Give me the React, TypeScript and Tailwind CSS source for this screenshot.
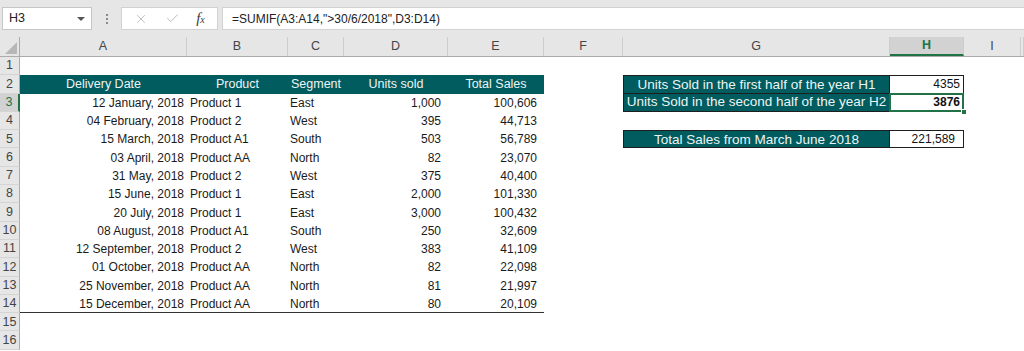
import React from 'react';
import { X, Check } from 'lucide-react';

const COLS = 'grid grid-cols-[20px_167px_101px_56px_104px_96px_79px_267px_74px_57px_1fr] grid-rows-[100%]';
const TEAL = 'bg-[#005c5f] text-[#eef4f4]';

const data = [
  ['12 January, 2018', 'Product 1', 'East', '1,000', '100,606'],
  ['04 February, 2018', 'Product 2', 'West', '395', '44,713'],
  ['15 March, 2018', 'Product A1', 'South', '503', '56,789'],
  ['03 April, 2018', 'Product AA', 'North', '82', '23,070'],
  ['31 May, 2018', 'Product 2', 'West', '375', '40,400'],
  ['15 June, 2018', 'Product 1', 'East', '2,000', '101,330'],
  ['20 July, 2018', 'Product 1', 'East', '3,000', '100,432'],
  ['08 August, 2018', 'Product A1', 'South', '250', '32,609'],
  ['12 September, 2018', 'Product 2', 'West', '383', '41,109'],
  ['01 October, 2018', 'Product AA', 'North', '82', '22,098'],
  ['25 November, 2018', 'Product AA', 'North', '81', '21,997'],
  ['15 December, 2018', 'Product AA', 'North', '80', '20,109'],
];

const colLetters = ['A', 'B', 'C', 'D', 'E', 'F', 'G', 'H', 'I', ''];

const RowHead: React.FC<{ n: number }> = ({ n }) => (
  <div
    className={`flex items-center justify-center text-[12.5px] border-b border-[#d4d4d4] ${
      n === 3
        ? 'bg-[#d2d2d2] text-[#217346] border-r-2 border-r-[#217346]'
        : 'bg-[#e6e6e6] text-[#444] border-r border-r-[#ababab]'
    }`}
  >
    {n}
  </div>
);

const Empty = () => <div />;

const Toolbar = () => (
  <div className="h-[37px] bg-[#e6e6e6] flex items-start pt-[7px] pl-[2px]">
    {/* Name box */}
    <div className="w-[90px] h-[23px] bg-white border border-[#c6c6c6] flex items-center justify-between pl-[6px] pr-[6px] text-[12.5px] text-[#222]">
      <span>H3</span>
      <span className="w-0 h-0 border-l-[4px] border-r-[4px] border-t-[4px] border-l-transparent border-r-transparent border-t-[#555]" />
    </div>
    {/* vertical dots */}
    <div className="w-[29px] h-[23px] flex flex-col items-center justify-center gap-[2px]">
      <span className="w-[2px] h-[2px] bg-[#8a8a8a]" />
      <span className="w-[2px] h-[2px] bg-[#8a8a8a]" />
      <span className="w-[2px] h-[2px] bg-[#8a8a8a]" />
    </div>
    {/* cancel / enter / fx */}
    <div className="w-[97px] h-[23px] bg-white border border-[#d2d2d2] flex items-center justify-around px-[4px]">
      <X size={14} strokeWidth={1.2} className="text-[#a6a6a6]" />
      <Check size={15} strokeWidth={1.2} className="text-[#a6a6a6]" />
      <span className="text-[#3a3a3a] text-[15px] italic font-['Liberation_Serif',serif] leading-none">
        f<span className="text-[10px]">x</span>
      </span>
    </div>
    {/* formula input */}
    <div className="ml-[4px] flex-1 h-[23px] bg-white border border-[#d2d2d2] border-r-0 flex items-center pl-[9px] text-[12px] text-[#222]">
      =SUMIF(A3:A14,"&gt;30/6/2018",D3:D14)
    </div>
  </div>
);

const ColHeader = () => (
  <div className={`${COLS} h-[20px] bg-[#e6e6e6] border-b border-[#ababab]`}>
    <div className="relative border-r border-[#ababab]">
      <svg className="absolute right-[2px] bottom-[2px]" width="12" height="12" viewBox="0 0 12 12">
        <polygon points="12,0 12,12 0,12" fill="#b7b7b7" />
      </svg>
    </div>
    {colLetters.map((l, i) => (
      <div
        key={i}
        className={`flex items-center justify-center text-[12.5px] border-r border-[#cdcdcd] ${
          l === 'H'
            ? 'bg-[#d2d2d2] text-[#217346] font-bold border-b-2 border-b-[#217346]'
            : 'text-[#444]'
        }`}
      >
        {l}
      </div>
    ))}
  </div>
);

export default function App() {
  const rows: React.ReactNode[] = [];

  for (let n = 1; n <= 16; n++) {
    let cells: React.ReactNode;
    if (n === 2) {
      cells = (
        <>
          <div className={`${TEAL} flex items-center justify-center text-[12.5px]`}>Delivery Date</div>
          <div className={`${TEAL} flex items-center justify-center text-[12.5px]`}>Product</div>
          <div className={`${TEAL} flex items-center justify-center text-[12.5px]`}>Segment</div>
          <div className={`${TEAL} flex items-center justify-center text-[12.5px]`}>Units sold</div>
          <div className={`${TEAL} flex items-center justify-center text-[12.5px]`}>Total Sales</div>
          <Empty />
          <div className={`${TEAL} flex items-center justify-center border border-[#1e1e1e] text-[13.5px]`}>
            Units Sold in the first half of the year H1
          </div>
          <div className="flex items-center justify-end pr-[3px] border-t border-r border-b border-[#1e1e1e] text-[#111]">
            4355
          </div>
          <Empty />
          <Empty />
        </>
      );
    } else if (n >= 3 && n <= 14) {
      const d = data[n - 3];
      const last = n === 14 ? 'border-b border-[#333]' : '';
      cells = (
        <>
          <div className={`flex items-center justify-end pr-[3px] ${last}`}>{d[0]}</div>
          <div className={`flex items-center pl-[3px] ${last}`}>{d[1]}</div>
          <div className={`flex items-center pl-[2px] ${last}`}>{d[2]}</div>
          <div className={`flex items-center justify-end pr-[7px] ${last}`}>{d[3]}</div>
          <div className={`flex items-center justify-end pr-[7px] ${last}`}>{d[4]}</div>
          <Empty />
          {n === 3 ? (
            <>
              <div className={`${TEAL} flex items-center justify-center border-l border-r border-b border-[#1e1e1e] text-[13.5px]`}>
                Units Sold in the second half of the year H2
              </div>
              <div className="relative flex items-center justify-end pr-[3px] border-r border-b border-[#1e1e1e] font-bold text-[#111]">
                3876
                <span className="absolute -left-[1px] -top-[1px] -right-[1px] -bottom-[1px] border-2 border-[#217346]" />
                <span className="absolute -right-[4px] -bottom-[4px] w-[6px] h-[6px] bg-[#217346] border border-white" />
              </div>
            </>
          ) : n === 5 ? (
            <>
              <div className={`${TEAL} flex items-center justify-center border border-[#1e1e1e] text-[13.5px]`}>
                Total Sales from March June 2018
              </div>
              <div className="flex items-center justify-end pr-[8px] border-t border-r border-b border-[#1e1e1e] text-[#111]">
                221,589
              </div>
            </>
          ) : (
            <>
              <Empty />
              <Empty />
            </>
          )}
          <Empty />
          <Empty />
        </>
      );
    } else {
      cells = (
        <>
          {colLetters.map((_, i) => (
            <Empty key={i} />
          ))}
        </>
      );
    }
    rows.push(
      <div key={n} className={`${COLS} h-[18.3px] whitespace-nowrap leading-none`}>
        <RowHead n={n} />
        {cells}
      </div>
    );
  }

  return (
    <div className="w-[1024px] h-[351px] overflow-hidden bg-white font-['Liberation_Sans',Arial,sans-serif] text-[12px] text-[#1a1a1a]">
      <Toolbar />
      <ColHeader />
      {rows}
    </div>
  );
}
